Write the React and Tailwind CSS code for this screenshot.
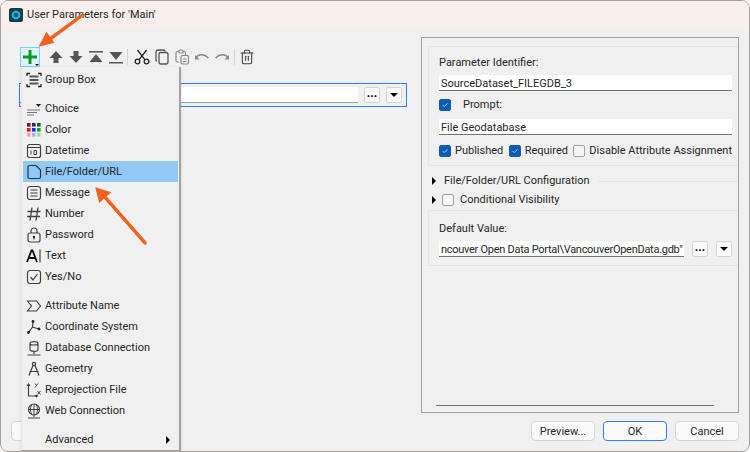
import React from "react";
import { Trash2 } from "lucide-react";

const Ico = ({ children, className = "" }) => (
  <svg viewBox="0 0 16 16" fill="none" stroke="#404040" strokeWidth="1.2" className={"w-4 h-4 " + className}>
    {children}
  </svg>
);

const GroupBox = () => (
  <Ico>
    <path d="M1 4V1.5h3M12 1.5h3V4M1 12v2.5h3M12 14.5h3V12" strokeWidth="1.3" stroke="#222" />
    <path d="M3.5 4.5h9M3.5 8h9M3.5 11.5h9" strokeWidth="2.2" stroke="#555" />
  </Ico>
);
const Choice = () => (
  <Ico>
    <path d="M1 9h13M1 11.5h10M1 14h7" stroke="#777" />
    <path d="M10 3h5l-2.5 3z" fill="#111" stroke="none" />
  </Ico>
);
const Color = () => (
  <svg viewBox="0 0 16 16" className="w-4 h-4">
    {[["#a00020", "#2a2a80", "#0a6a20"], ["#ee1020", "#1030e0", "#10a030"], ["#f8a0b0", "#b0b0f0", "#90e0a0"]].map((r, i) =>
      r.map((c, j) => <rect key={c} x={1 + j * 5} y={1 + i * 5} width="3.6" height="3.6" fill={c} />)
    )}
  </svg>
);
const Datetime = () => (
  <Ico>
    <rect x="1.5" y="1.5" width="13" height="13" rx="2" />
    <path d="M1.5 4.5h13" />
    <path d="M5 7.5v4M8 7.5h2.5v4H8z" strokeWidth="1" />
  </Ico>
);
const FileI = () => (
  <Ico>
    <path d="M2 3a1.5 1.5 0 0 1 1.5-1.5H10L14.5 6v7a1.5 1.5 0 0 1-1.5 1.5H3.5A1.5 1.5 0 0 1 2 13z" stroke="#234" />
  </Ico>
);
const Message = () => (
  <Ico>
    <rect x="1.5" y="1.5" width="13" height="13" rx="2.5" />
    <path d="M4.5 5h7M4.5 8h7M4.5 11h7" />
  </Ico>
);
const Hash = () => (
  <Ico>
    <path d="M6 1.5 4 14.5M12 1.5l-2 13M1.5 5.5h13M1 10.5h13" strokeWidth="1.3" />
  </Ico>
);
const Password = () => (
  <Ico>
    <rect x="2" y="6" width="12" height="9" rx="2" />
    <path d="M5 6V4a3 3 0 0 1 6 0v2" />
    <circle cx="8" cy="10" r="1.2" fill="#222" stroke="none" />
    <path d="M8 10v2.5" />
  </Ico>
);
const TextI = () => (
  <Ico>
    <path d="M1 14 5.5 2.5h1L11 14M3 10h7" strokeWidth="1.8" stroke="#111" />
    <path d="M14 1.5v13" strokeWidth="1" stroke="#222" />
  </Ico>
);
const YesNo = () => (
  <Ico>
    <rect x="1.5" y="1.5" width="13" height="13" rx="2.5" />
    <path d="m4.5 8 2.5 3 4.5-6" />
  </Ico>
);
const Sigma = () => (
  <Ico>
    <path d="M1.5 3h9l4 5-4 5h-9l4-5z" />
  </Ico>
);
const Coord = () => (
  <Ico>
    <path d="M6.5 8 7 3M6.5 8l-3.5 5M6.5 8l6 2" />
    <circle cx="7" cy="2.5" r="1.4" fill="#222" stroke="none" />
    <circle cx="2.5" cy="13.5" r="1.4" fill="#222" stroke="none" />
    <circle cx="13" cy="10" r="1.4" fill="#222" stroke="none" />
  </Ico>
);
const Db = () => (
  <Ico>
    <path d="M4 3.5c0-2.500 8-2.500 8 0v6c0 2.500-8 2.500-8 0zM4 3.500c0 2 8 2 8 0M8 11.500V14M1.500 15h13" />
  </Ico>
);
const Geometry = () => (
  <Ico>
    <circle cx="8" cy="3" r="1.6" />
    <path d="M7 4.5 3 14.500M9 4.500l4 10M3.500 10.500h9" />
  </Ico>
);
const Reproj = () => (
  <Ico>
    <path d="M2.500 2v12h8" />
    <path d="M1 4l1.500-2L4 4" />
    <path d="M9 1.500l1.500 2M12 1.500l-3 4M11.500 9l3 3.500M14.500 9l-3 3.500" strokeWidth="1" />
    <circle cx="10.5" cy="14" r="1.2" fill="#222" stroke="none" />
  </Ico>
);
const Web = () => (
  <Ico>
    <circle cx="8" cy="6.5" r="5.5" />
    <path d="M2.500 6.500h11M8 1v11M5.500 2c-1.500 3-1.500 6 0 9M10.500 2c1.500 3 1.500 6 0 9M8 12v2M2 15h12" strokeWidth="1" />
  </Ico>
);

const Item = ({ icon: I, label, active, arrow }) => (
  <div className={"flex-1 flex items-center ml-px mr-px " + (active ? "bg-[#90c8f6]" : "")}>
    <div className="w-5.5 flex justify-center">{I ? <I /> : null}</div>
    <span className="flex-1">{label}</span>
    {arrow ? <span className="w-0 h-0 mr-2 border-y-4 border-l-4 border-y-transparent border-l-black" /> : null}
  </div>
);
const Sep = () => <div className="my-1" />;

const Tool = ({ children }) => <div className="w-5 h-5 flex items-center justify-center">{children}</div>;

const Check = ({ on }) => (
  <span className={"w-3 h-3 rounded-xs flex items-center justify-center shrink-0 border " + (on ? "bg-[#0f5cb8] border-[#0f5cb8]" : "bg-neutral-100 border-neutral-400")}>
    {on ? (
      <svg viewBox="0 0 10 10" className="w-2 h-2" fill="none" stroke="#cfe0f5" strokeWidth="1">
        <path d="m2 5 2 2 4-4" />
      </svg>
    ) : null}
  </span>
);

const Field = ({ children, className = "" }) => (
  <div className={"h-4 bg-white border-b border-neutral-500 flex items-center px-0.5 pt-0.5 overflow-hidden whitespace-nowrap " + className}>{children}</div>
);

const Small = ({ children }) => (
  <div className="w-4 h-4 bg-neutral-50 border border-neutral-300 rounded-xs flex items-center justify-center font-bold text-black leading-none">{children}</div>
);
const Dots = () => <Small><span className="text-xs leading-none -mt-1">...</span></Small>;
const Down = () => <Small><span className="w-0 h-0 border-x-4 border-t-4 border-x-transparent border-t-black" /></Small>;
const Tri = () => <span className="w-0 h-0 border-y-4 border-l-4 border-y-transparent border-l-black" />;

const Btn = ({ children, blue, className = "" }) => (
  <div className={"w-16 h-5 rounded-sm bg-neutral-50 flex items-center justify-center pt-px border " + (blue ? "border-blue-500" : "border-neutral-300") + " " + className}>{children}</div>
);

export default function App() {
  return (
    <div
      className="relative w-full h-screen overflow-hidden flex flex-col bg-[#f0f0f0] border border-stone-400 rounded-lg text-neutral-800 text-[11px] leading-4"
      style={{ fontFamily: '"Roboto", "Liberation Sans", sans-serif' }}
    >
      <div className="h-7 shrink-0 bg-[#f8efec] flex items-center pl-2 gap-1">
        <svg viewBox="0 0 16 16" className="w-3.5 h-3.5">
          <rect width="16" height="16" rx="3" fill="#123c4a" />
          <circle cx="8" cy="8" r="5" fill="#16c0d8" />
          <circle cx="8" cy="8" r="2.5" fill="#0a4a6a" />
        </svg>
        <span>User Parameters for 'Main'</span>
      </div>

      <div className="flex-1 min-h-0 flex">
        <div className="w-105 shrink-0 pl-5 pr-3.5 pt-4.5">
          <div className="flex items-center">
            <div className="relative w-5 h-5 -ml-px bg-sky-100 border border-sky-300 flex items-center justify-center">
              <svg viewBox="0 0 16 16" className="w-4 h-4">
                <path d="M6.500 1h3v5.500h5.500v3H9.500V15h-3V9.500H1v-3h5.500z" fill="#0a9a1e" />
              </svg>
              <span className="absolute right-0 bottom-0 w-0 h-0 border-x-2 border-t-2 border-x-transparent border-t-black" />
            </div>
            <div className="w-1.5" />
            <Tool><svg viewBox="0 0 16 16" className="w-4 h-4" fill="#555"><path d="M8 2l6.500 7H10.500v5h-5V9H1.500z" /></svg></Tool>
            <Tool><svg viewBox="0 0 16 16" className="w-4 h-4" fill="#555"><path d="M8 14l6.500-7H10.500V2h-5v5H1.500z" /></svg></Tool>
            <Tool><svg viewBox="0 0 16 16" className="w-4 h-4" fill="#555"><path d="M1 2h14v1.500H1zM8 5l6.500 8h-13z" /></svg></Tool>
            <Tool><svg viewBox="0 0 16 16" className="w-4 h-4" fill="#555"><path d="M1 13h14v1.500H1zM8 11 1.500 3h13z" /></svg></Tool>
            <div className="w-px h-4 bg-neutral-300 ml-px mr-1" />
            <Tool>
              <svg viewBox="0 0 16 16" className="w-4 h-4" fill="none" stroke="#222" strokeWidth="1.300">
                <circle cx="3.500" cy="12.500" r="2.300" />
                <circle cx="12.500" cy="12.500" r="2.300" />
                <path d="M5 10.800 12.500 1M11 10.800 3.500 1" />
              </svg>
            </Tool>
            <Tool>
              <svg viewBox="0 0 16 16" className="w-4 h-4" fill="none" stroke="#555" strokeWidth="1.3">
                <rect x="5" y="3.500" width="9" height="11.500" rx="2" />
                <path d="M11 2.500A1.500 1.500 0 0 0 9.500 1H4a2 2 0 0 0-2 2v8a1.500 1.500 0 0 0 1 1.500" />
              </svg>
            </Tool>
            <Tool>
              <svg viewBox="0 0 16 16" className="w-4 h-4" fill="none" stroke="#888" strokeWidth="1.2">
                <path d="M5 13H3.500A1.500 1.500 0 0 1 2 11.500V4a1.500 1.500 0 0 1 1.500-1.500H5M9 2.500h1A1.500 1.500 0 0 1 11.500 4v2" />
                <rect x="5" y="1" width="4" height="3" rx="1" />
                <rect x="7" y="6.500" width="7.500" height="8.500" rx="1.500" />
                <path d="M9 10h3.500M9 12.500h3.500" />
              </svg>
            </Tool>
            <Tool>
              <svg viewBox="0 0 16 16" className="w-4 h-4" fill="none" stroke="#8a8a8a" strokeWidth="1.4">
                <path d="M2 9c2-4 8-4.500 12.500 0" />
                <path d="M1 6v4.500h4.500z" fill="#8a8a8a" stroke="none" />
              </svg>
            </Tool>
            <Tool>
              <svg viewBox="0 0 16 16" className="w-4 h-4" fill="none" stroke="#8a8a8a" strokeWidth="1.4">
                <path d="M14 9C12 5 6 4.500 1.500 9" />
                <path d="M15 6v4.500h-4.500z" fill="#8a8a8a" stroke="none" />
              </svg>
            </Tool>
            <div className="w-px h-4 bg-neutral-300 ml-0.5 mr-0.5" />
            <Tool><Trash2 className="w-4 h-4 text-neutral-700" strokeWidth={1.6} /></Tool>
          </div>

          <div className="h-6 mt-4 -ml-0.5 border border-blue-500 flex items-center pr-1 gap-1.5">
            <div className="flex-1 h-4 bg-white border-b border-neutral-400" />
            <Dots />
            <Down />
          </div>
        </div>

        <div className="flex-1 min-w-0 mr-2.5 mt-2 border border-neutral-400 flex flex-col pl-1.5 pt-2 relative">
          <div className="border border-neutral-200 border-r-0 pl-2.5 pr-1.5 pt-2 pb-1.5 flex flex-col">
            <div>Parameter Identifier:</div>
            <Field className="mt-1">SourceDataset_FILEGDB_3</Field>
            <div className="flex items-center gap-3 mt-1.5"><Check on /><span>Prompt:</span></div>
            <Field className="mt-1.5">File Geodatabase</Field>
            <div className="flex items-center mt-1.5 pt-0.5 whitespace-nowrap">
              <Check on /><span className="ml-1">Published</span>
              <span className="w-2.5" />
              <Check on /><span className="ml-1">Required</span>
              <span className="w-2.5" />
              <Check /><span className="ml-1">Disable Attribute Assignment</span>
            </div>
          </div>
          <div className="flex items-center h-5 mt-1 pt-0.5 pl-1 gap-2">
            <Tri /><span>File/Folder/URL Configuration</span>
            <div className="flex-1 h-px bg-neutral-200" />
          </div>
          <div className="flex items-center h-5 pl-1 gap-1.5">
            <Tri /><Check /><span>Conditional Visibility</span>
          </div>
          <div className="border border-neutral-200 border-r-0 pl-2.5 pr-1.5 pt-2.5 pb-2 flex flex-col">
            <div>Default Value:</div>
            <div className="flex items-center gap-2 mt-1">
              <Field className="flex-1 min-w-0 tracking-tight">ncouver Open Data Portal\VancouverOpenData.gdb"</Field>
              <Dots />
              <Down />
            </div>
          </div>
          <div className="absolute left-3.5 right-6 bottom-1.5 h-px bg-neutral-500" />
        </div>
      </div>

      <div className="shrink-0 flex items-center px-2.5 pt-2 pb-2.5 gap-2">
        <Btn />
        <div className="flex-1" />
        <Btn>Preview...</Btn>
        <Btn blue>OK</Btn>
        <Btn>Cancel</Btn>
      </div>

      <div className="absolute left-5 top-16.5 w-40 h-96 bg-[#f0f0f0] border-r-2 border-b border-neutral-400 border-l border-l-neutral-200 pt-0.5 flex flex-col shadow">
        <Item icon={GroupBox} label="Group Box" />
        <Sep />
        <Item icon={Choice} label="Choice" />
        <Item icon={Color} label="Color" />
        <Item icon={Datetime} label="Datetime" />
        <Item icon={FileI} label="File/Folder/URL" active />
        <Item icon={Message} label="Message" />
        <Item icon={Hash} label="Number" />
        <Item icon={Password} label="Password" />
        <Item icon={TextI} label="Text" />
        <Item icon={YesNo} label="Yes/No" />
        <Sep />
        <Item icon={Sigma} label="Attribute Name" />
        <Item icon={Coord} label="Coordinate System" />
        <Item icon={Db} label="Database Connection" />
        <Item icon={Geometry} label="Geometry" />
        <Item icon={Reproj} label="Reprojection File" />
        <Item icon={Web} label="Web Connection" />
        <Sep />
        <Item label="Advanced" arrow />
      </div>

      <svg viewBox="0 0 750 452" className="absolute inset-0 w-full h-full pointer-events-none">
        <path d="M80 15 46 40" stroke="#f4601e" strokeWidth="3.5" strokeLinecap="round" />
        <path d="M37 46 53 42 45 31z" fill="#f4601e" />
        <path d="M144 243 102 195" stroke="#f4601e" strokeWidth="3.5" strokeLinecap="round" />
        <path d="M94 187 110 192 98 203z" fill="#f4601e" />
      </svg>
    </div>
  );
}
